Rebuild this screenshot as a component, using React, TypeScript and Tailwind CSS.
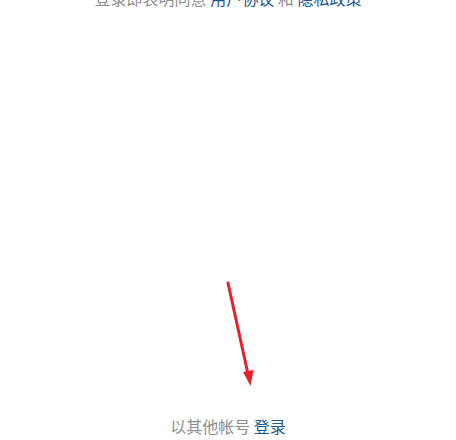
export default function App() {
  return (
    <div
      className="relative h-[440px] w-[456px] overflow-hidden bg-white"
      style={{ fontFamily: '"Noto Sans CJK SC", "Noto Sans", sans-serif' }}
    >
      <div className="flex h-full flex-col items-center justify-between">
        <p className="-mt-[14px] text-[16px] leading-6 text-[#8e8e8e]">
          登录即表明同意 <span className="text-[#23578f]">用户协议</span> 和{' '}
          <span className="text-[#23578f]">隐私政策</span>
        </p>
        <p className="mb-[2px] text-[16px] leading-6 text-[#8e8e8e]">
          以其他帐号 <span className="text-[#23578f]">登录</span>
        </p>
      </div>

      {/* annotation arrow */}
      <svg className="absolute left-0 top-0" width="456" height="440" viewBox="0 0 456 440">
        <line x1="228" y1="283" x2="248" y2="374" stroke="#e8202a" strokeWidth="3" strokeLinecap="round" />
        <polygon points="250.5,386 243,372 253.5,370" fill="#e8202a" />
      </svg>
    </div>
  );
}
